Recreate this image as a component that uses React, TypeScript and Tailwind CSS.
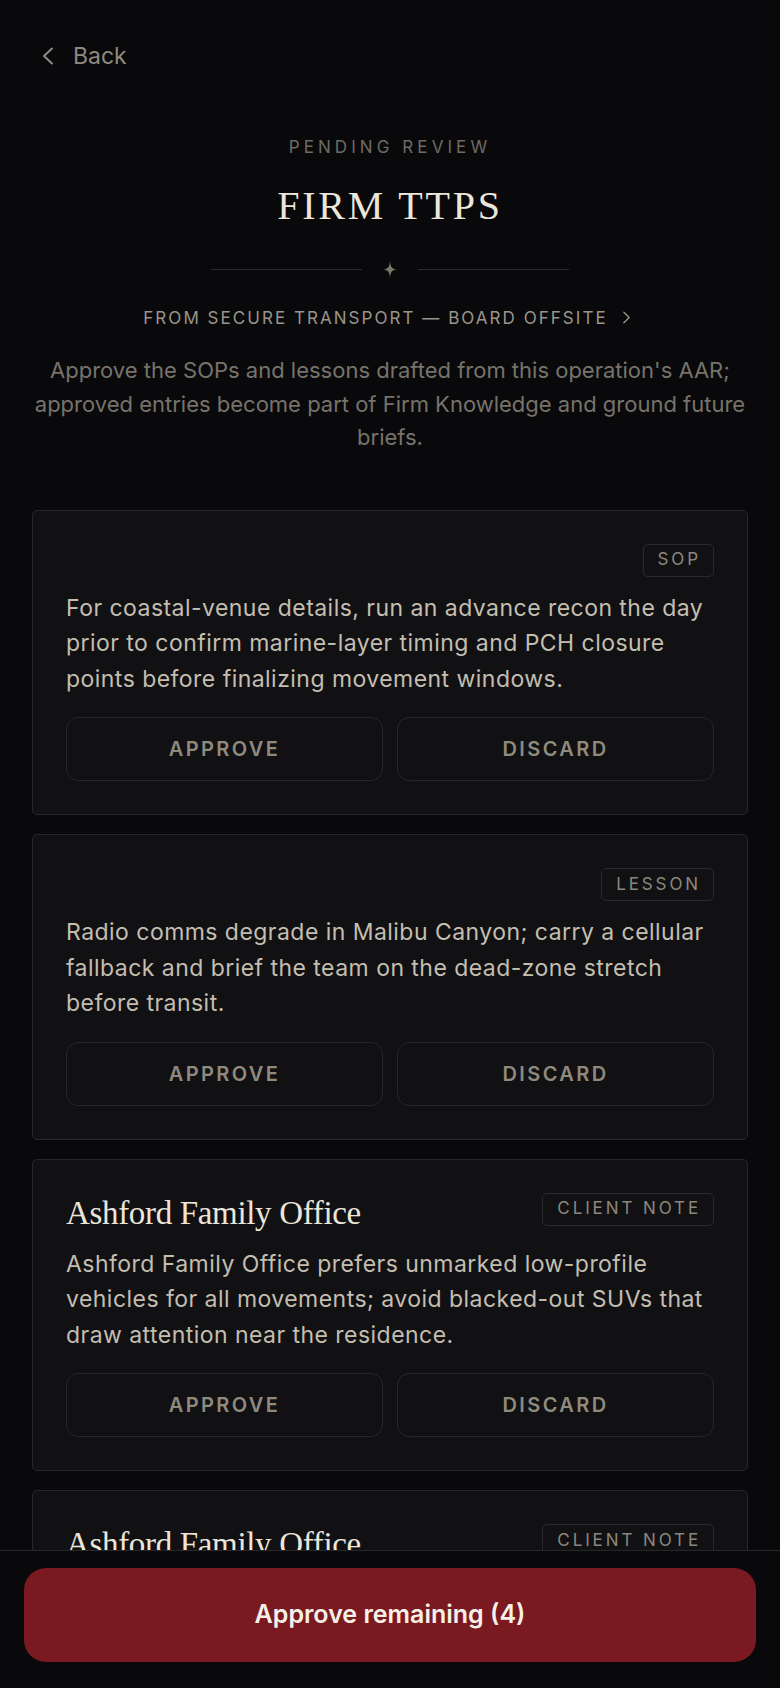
import { ChevronRight } from "lucide-react";

type Entry = {
  kind: string;
  title?: string;
  body: string;
};

const ENTRIES: Entry[] = [
  {
    kind: "SOP",
    body: "For coastal-venue details, run an advance recon the day prior to confirm marine-layer timing and PCH closure points before finalizing movement windows.",
  },
  {
    kind: "LESSON",
    body: "Radio comms degrade in Malibu Canyon; carry a cellular fallback and brief the team on the dead-zone stretch before transit.",
  },
  {
    kind: "CLIENT NOTE",
    title: "Ashford Family Office",
    body: "Ashford Family Office prefers unmarked low-profile vehicles for all movements; avoid blacked-out SUVs that draw attention near the residence.",
  },
  {
    kind: "CLIENT NOTE",
    title: "Ashford Family Office",
    body: "Principal's arrival window at the residence shifts on board days; confirm gate codes and the staff contact the evening before.",
  },
];

const sans = { fontFamily: "Inter, 'Noto Sans', sans-serif" };
const serif = { fontFamily: "'Liberation Serif', 'DejaVu Serif', serif" };

function Sparkle() {
  return (
    <svg width="14" height="17" viewBox="0 0 14 17" className="shrink-0">
      <path
        d="M7 0C7.5 5.6 8.4 7.9 14 8.5C8.4 9.1 7.5 11.4 7 17C6.5 11.4 5.6 9.1 0 8.5C5.6 7.9 6.5 5.6 7 0Z"
        fill="#7a766c"
      />
    </svg>
  );
}

function EntryCard({ e }: { e: Entry }) {
  return (
    <div className="rounded-[5px] border border-[#27272a] bg-[#111113] px-[33px] pt-[33px] pb-[33px]">
      <div className="mb-[14px] flex items-start justify-between">
        {e.title ? (
          <div className="text-[33px] leading-[40px] tracking-[-0.01em] text-[#ece6da]" style={serif}>
            {e.title}
          </div>
        ) : (
          <div />
        )}
        <span className="flex h-[33px] items-center rounded-[5px] border border-[#2a2a2d] pl-[14px] pr-[12px] text-[17px] tracking-[0.17em] text-[#8c877d]">
          {e.kind}
        </span>
      </div>
      <p className="text-[23px] leading-[35.5px] tracking-[0.02em] text-[#c4beb1]">{e.body}</p>
      <div className="mt-[20px] grid grid-cols-2 gap-[14px]">
        <button className="h-[64px] rounded-[12px] border border-[#27272a] text-[20px] font-semibold tracking-[0.12em] text-[#8f8a7e]">
          APPROVE
        </button>
        <button className="h-[64px] rounded-[12px] border border-[#27272a] text-[20px] font-semibold tracking-[0.12em] text-[#8f8a7e]">
          DISCARD
        </button>
      </div>
    </div>
  );
}

export default function App() {
  return (
    <div className="relative h-screen overflow-hidden bg-[#09090b]" style={sans}>
      <div className="px-[32px]">
        <div className="mt-[36px] flex h-10 items-center pl-[9px]">
          <svg width="13" height="18" viewBox="0 0 13 18" fill="none">
            <path d="M11 1.5L3 9L11 16.5" stroke="#8f8a80" strokeWidth="2" strokeLinecap="round" strokeLinejoin="round" />
          </svg>
          <span className="ml-[19px] text-[23px] text-[#8f8a80]">Back</span>
        </div>

        <div className="text-center">
          <div className="mt-[61px] text-[17px] leading-[20px] tracking-[0.24em] text-[#6f6b63]">
            PENDING REVIEW
          </div>
          <h1 className="mt-[25px] text-[40px] leading-[48px] tracking-[0.07em] text-[#ece6da]" style={serif}>
            FIRM TTPS
          </h1>
          <div className="mt-[30px] flex h-[18px] items-center justify-center gap-[21px]">
            <div className="h-px w-[151px] bg-[#2c2c2d]" />
            <Sparkle />
            <div className="h-px w-[151px] bg-[#2c2c2d]" />
          </div>
          <div className="mt-[29px] flex items-center justify-center gap-[8px] text-[17px] leading-[20px] tracking-[0.12em] text-[#9a958a]">
            <span>FROM SECURE TRANSPORT — BOARD OFFSITE</span>
            <ChevronRight size={21} strokeWidth={1.6} className="text-[#9a958a]" />
          </div>
          <p className="mt-[26px] text-[22px] leading-[33.5px] text-[#77736a]">
            Approve the SOPs and lessons drafted from this operation's AAR; approved entries become part of Firm Knowledge and ground future briefs.
          </p>
        </div>

        <div className="mt-[55px] flex flex-col gap-[19px]">
          {ENTRIES.map((e, i) => (
            <EntryCard key={i} e={e} />
          ))}
        </div>
      </div>

      <div className="absolute inset-x-0 bottom-0 h-[138px] border-t border-[#27272a] bg-[#09090b] px-[24px] pt-[17px]">
        <button className="h-[94px] w-full rounded-[22px] bg-[#7a1a20] text-[25px] font-semibold text-[#f6f1e8]">
          Approve remaining (4)
        </button>
      </div>
    </div>
  );
}
